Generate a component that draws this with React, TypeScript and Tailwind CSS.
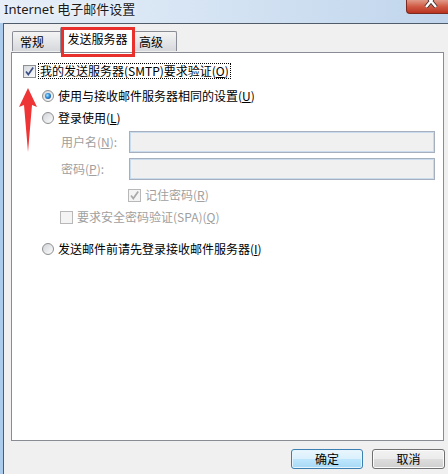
import React from 'react';

// Win7 style check box
const Check = ({ checked, disabled }: { checked?: boolean; disabled?: boolean }) => (
  <span
    className={`flex h-[13px] w-[13px] shrink-0 items-center justify-center border ${
      disabled ? 'border-[#b8b8b8] bg-[#f4f4f4]' : 'border-[#8e8f8f] bg-linear-to-br from-[#d5d9de] to-[#fbfbfb]'
    }`}
  >
    {checked && (
      <svg width="11" height="11" viewBox="0 0 11 11">
        <path
          d="M2 5.5 L4.3 8.6 L9.2 1.6"
          fill="none"
          stroke={disabled ? '#a9a9a9' : '#3b4f86'}
          strokeWidth="1.7"
        />
      </svg>
    )}
  </span>
);

const Radio = ({ on }: { on?: boolean }) => (
  <span className="flex h-[12px] w-[12px] shrink-0 items-center justify-center rounded-full border border-[#8e8f8f] bg-linear-to-br from-[#d0d3d8] to-[#fdfdfd]">
    {on && (
      <span className="h-[6px] w-[6px] rounded-full bg-[radial-gradient(circle_at_40%_40%,#a6e4ff_0%,#2f8ad6_45%,#123a72_100%)]" />
    )}
  </span>
);

const K = ({ c }: { c: string }) => <span className="underline underline-offset-[1px]">{c}</span>;

const DisabledInput = () => (
  <div className="mr-[8px] h-[22px] flex-1 border border-[#a6afbd] bg-[#f0f0f0] shadow-[inset_0_0_0_1px_#c9dcee]" />
);

export default function App() {
  return (
    <div className="flex h-[474px] w-[448px] flex-col overflow-hidden bg-[#f0f0f0] font-['Noto_Sans_CJK_SC',sans-serif] text-[12px] text-black">
      {/* title bar */}
      <div className="relative flex h-[23px] shrink-0 items-center bg-linear-to-r from-[#e6eef8] via-[#d4e3f3] to-[#c0d5ec] pl-[4px]">
        <span className="pb-[5px] font-['Noto_Sans','Noto_Sans_CJK_SC',sans-serif] text-[13px] leading-[15px] text-[#1a1a1a] [text-shadow:0_0_6px_#ffffff]">
          Internet 电子邮件设置
        </span>
        <div className="absolute right-0 top-0 h-[14px] w-[42px] overflow-hidden rounded-bl-[4px] border-b border-l border-[#7a2a20] bg-linear-to-b from-[#e09a88] via-[#d05a44] to-[#b8321f]">
          <svg className="absolute left-[17px] top-[-6px]" width="14" height="14" viewBox="0 0 14 14">
            <path d="M2 1 L12 13 M12 1 L2 13" stroke="#3b2a2a" strokeWidth="4" />
            <path d="M2 1 L12 13 M12 1 L2 13" stroke="#ffffff" strokeWidth="2.4" />
          </svg>
        </div>
      </div>

      <div className="flex flex-1">
        <div className="w-[3px] shrink-0 bg-[#acccee]" />
        <div className="flex flex-1 flex-col border-l border-t border-[#515c6b]">
          {/* tabs */}
          <div className="relative ml-[8px] flex h-[28px] shrink-0 items-end">
            <div className="mb-[1px] flex h-[20px] w-[50px] items-center rounded-t-[2px] border border-b-0 border-[#898c95] bg-linear-to-b from-[#f4f4f4] to-[#d6d8dc] pl-[7px] leading-[16px]">
              常规
            </div>
            <div className="relative z-10 -ml-[2px] flex h-[25px] w-[75px] items-center justify-center rounded-t-[2px] border border-b-0 border-[#898c95] bg-white pb-[3px] leading-[16px]">
              发送服务器
            </div>
            <div className="mb-[1px] -ml-[1px] flex h-[20px] w-[43px] items-center rounded-t-[2px] border border-b-0 border-[#898c95] bg-linear-to-b from-[#f4f4f4] to-[#d6d8dc] pl-[4px] leading-[16px]">
              高级
            </div>
            <div className="pointer-events-none absolute left-[49px] top-[3px] z-20 h-[30px] w-[74px] border-[3px] border-[#e8312c]" />
          </div>

          {/* panel */}
          <div className="relative ml-[7px] flex h-[389px] w-[433px] shrink-0 flex-col border border-[#898c95] bg-white">
            <div className="mt-[10px] flex h-[16px] items-center pl-[11px]">
              <Check checked />
              <span className="ml-[2px] border border-dotted border-black px-[1px] leading-[14px]">
                我的发送服务器(SMTP)要求验证(<K c="O" />)
              </span>
            </div>

            <div className="mt-[9px] flex h-[16px] items-center pl-[30px]">
              <Radio on />
              <span className="ml-[4px] leading-[16px]">
                使用与接收邮件服务器相同的设置(<K c="U" />)
              </span>
            </div>

            <div className="mt-[6px] flex h-[16px] items-center pl-[30px]">
              <Radio />
              <span className="ml-[4px] leading-[16px]">
                登录使用(<K c="L" />)
              </span>
            </div>

            <div className="mt-[5px] flex h-[22px] items-center pl-[49px]">
              <span className="w-[68px] shrink-0 leading-[16px] text-[#a0a0a0]">
                用户名(<K c="N" />):
              </span>
              <DisabledInput />
            </div>

            <div className="mt-[5px] flex h-[22px] items-center pl-[49px]">
              <span className="w-[68px] shrink-0 leading-[16px] text-[#a0a0a0]">
                密码(<K c="P" />):
              </span>
              <DisabledInput />
            </div>

            <div className="mt-[7px] flex h-[16px] items-center pl-[116px]">
              <Check checked disabled />
              <span className="ml-[4px] leading-[16px] text-[#a0a0a0]">
                记住密码(<K c="R" />)
              </span>
            </div>

            <div className="mt-[6px] flex h-[16px] items-center pl-[48px]">
              <Check disabled />
              <span className="ml-[4px] leading-[16px] text-[#a0a0a0]">
                要求安全密码验证(SPA)(<K c="Q" />)
              </span>
            </div>

            <div className="mt-[16px] flex h-[16px] items-center pl-[30px]">
              <Radio />
              <span className="ml-[4px] leading-[16px]">
                发送邮件前请先登录接收邮件服务器(<K c="I" />)
              </span>
            </div>

            {/* annotation arrow */}
            <svg className="absolute left-[4px] top-[30px]" width="24" height="72" viewBox="0 0 24 72">
              <path d="M12 5 L21 24 L16 22 L12 69 L8 22 L3 24 Z" fill="#ee3434" />
            </svg>
          </div>

          {/* buttons */}
          <div className="mt-[8px] flex justify-end gap-[9px] pr-[3px]">
            <button className="flex h-[20px] w-[72px] items-center justify-center rounded-[3px] border border-[#3c7fb1] bg-[linear-gradient(to_bottom,#eaf6fd_0%,#d9f0fc_50%,#bee6fd_51%,#a7d9f5_100%)] leading-[16px] shadow-[inset_0_0_0_1px_#e6f5fd]">
              确定
            </button>
            <button className="flex h-[20px] w-[73px] items-center justify-center rounded-[3px] border border-[#707070] bg-[linear-gradient(to_bottom,#f2f2f2_0%,#ebebeb_50%,#dddddd_51%,#cfcfcf_100%)] leading-[16px] shadow-[inset_0_0_0_1px_#fbfbfb]">
              取消
            </button>
          </div>
        </div>
      </div>
    </div>
  );
}
